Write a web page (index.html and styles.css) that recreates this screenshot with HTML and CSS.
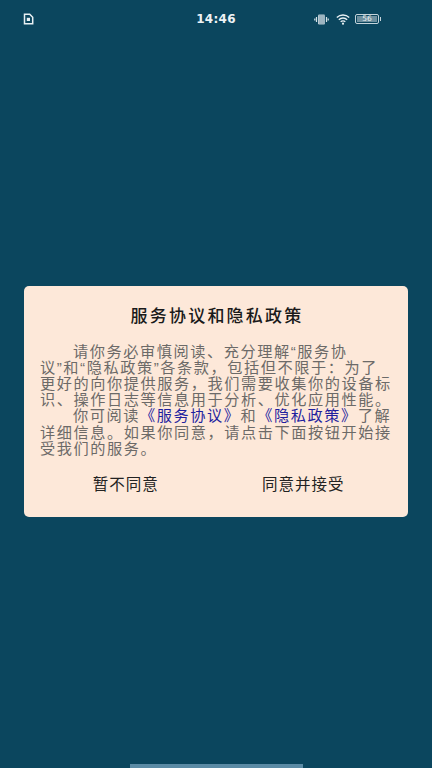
FILE: index.html
```html
<!DOCTYPE html>
<html lang="zh-CN">
<head>
<meta charset="utf-8">
<title>服务协议和隐私政策</title>
<link rel="stylesheet" href="styles.css">
</head>
<body>
<div class="screen">
  <header class="status">
    <svg class="sim" width="11" height="12" viewBox="0 0 11 12"><path d="M1.500 1.200h5.200l3 3v6.600h-8.200z" fill="none" stroke="#e8f0f3" stroke-width="1.500"/><rect x="3.800" y="4.800" width="3.200" height="3.200" fill="#e8f0f3"/></svg>
    <div class="time">14:46</div>
    <div class="indicators">
      <svg width="15" height="11" viewBox="0 0 15 11"><rect x="4" y="0.500" width="7" height="10" rx="1.200" fill="#b9cbd4"/><path d="M6 .5v10M8 .5v10M10 .5v10" stroke="#5b8090" stroke-width=".6"/><path d="M2.500 3v5M0.800 4.500v2M12.500 3v5M14.200 4.500v2" stroke="#d5e1e6" stroke-width="1.200"/></svg>
      <svg width="14" height="11" viewBox="0 0 14 11"><path d="M.8 3.500a9 9 0 0 1 12.400 0M2.800 5.700a6 6 0 0 1 8.400 0M4.700 7.800a3.200 3.200 0 0 1 4.600 0" fill="none" stroke="#e8f0f3" stroke-width="1.300"/><circle cx="7" cy="9.700" r="1.100" fill="#e8f0f3"/></svg>
      <div class="battery"><div class="level">56</div></div>
    </div>
  </header>
  <main class="center">
    <section class="dialog">
      <h1 class="title">服务协议和隐私政策</h1>
      <div class="body">
        <p class="para">请你务必审慎阅读、充分理解“服务协<br>议”和“隐私政策”各条款，包括但不限于：为了<br>更好的向你提供服务，我们需要收集你的设备标<br>识、操作日志等信息用于分析、优化应用性能。</p>
        <p class="para">你可阅读<a class="link">《服务协议》</a>和<a class="link">《隐私政策》</a>了解<br>详细信息。如果你同意，请点击下面按钮开始接<br>受我们的服务。</p>
      </div>
      <div class="actions">
        <div class="btn">暂不同意</div>
        <div class="btn">同意并接受</div>
      </div>
    </section>
  </main>
  <div class="home"></div>
</div>
</body>
</html>
```
FILE: styles.css
```css
* { box-sizing: border-box; }
html, body { margin: 0; padding: 0; }
body { font-family: "Liberation Sans", "Noto Sans CJK SC", sans-serif; }
.screen {
  position: relative;
  width: 432px;
  height: 768px;
  background: #0b465e;
  display: flex;
  flex-direction: column;
  overflow: hidden;
}
.status {
  height: 35px;
  flex: none;
  padding: 3px 23px 0;
  display: grid;
  grid-template-columns: 1fr auto 1fr;
  align-items: center;
  color: #e8f0f3;
}
.sim { display: block; }
.time {
  font-family: "DejaVu Sans", sans-serif;
  font-weight: 700;
  font-size: 12px;
  letter-spacing: 0.300px;
  color: #edf3f5;
}
.indicators {
  display: flex;
  align-items: center;
  justify-content: flex-end;
  gap: 7px;
  margin-right: 30px;
}
.battery {
  position: relative;
  width: 24px;
  height: 10px;
  margin-left: -2px;
  border: 1px solid #c4d4db;
  border-radius: 2px;
  padding: 1px;
  display: flex;
}
.battery::after {
  content: "";
  position: absolute;
  right: -3px;
  top: 2px;
  width: 1.500px;
  height: 4px;
  background: #c4d4db;
}
.level {
  flex: 1;
  display: flex;
  align-items: center;
  justify-content: center;
  background: #6d8f9e;
  color: #eef3f5;
  font-size: 7.500px;
  line-height: 6px;
  font-family: "DejaVu Sans", sans-serif;
}
.center {
  flex: 1;
  display: flex;
  align-items: center;
  justify-content: center;
}
.dialog {
  width: 384px;
  height: 231px;
  background: #fde8d9;
  border-radius: 5px;
  padding: 19px 16px 0;
  display: flex;
  flex-direction: column;
}
.title {
  margin: 0;
  font-size: 17px;
  font-weight: 500;
  letter-spacing: 2.200px;
  line-height: 20px;
  text-align: center;
  color: #1a1a1a;
  padding-left: 2px;
  font-family: "Noto Sans CJK SC", sans-serif;
}
.body {
  margin-top: 18.500px;
  font-size: 15.200px;
  line-height: 16.200px;
  letter-spacing: 1.560px;
  color: #6c6a68;
  white-space: nowrap;
}
.para { margin: 0; text-indent: 33px; }
.link { color: #1f1f9f; }
.actions {
  display: grid;
  grid-template-columns: 1fr 1fr;
  margin: 16.500px 0 0 -3px;
}
.btn {
  text-align: center;
  font-size: 15.500px;
  letter-spacing: 1px;
  line-height: 20px;
  color: #222;
  font-family: "Noto Sans CJK SC", sans-serif;
}
.home {
  position: absolute;
  left: 130px;
  bottom: 0;
  width: 173px;
  height: 4px;
  background: #5b8ba5;
}
```
